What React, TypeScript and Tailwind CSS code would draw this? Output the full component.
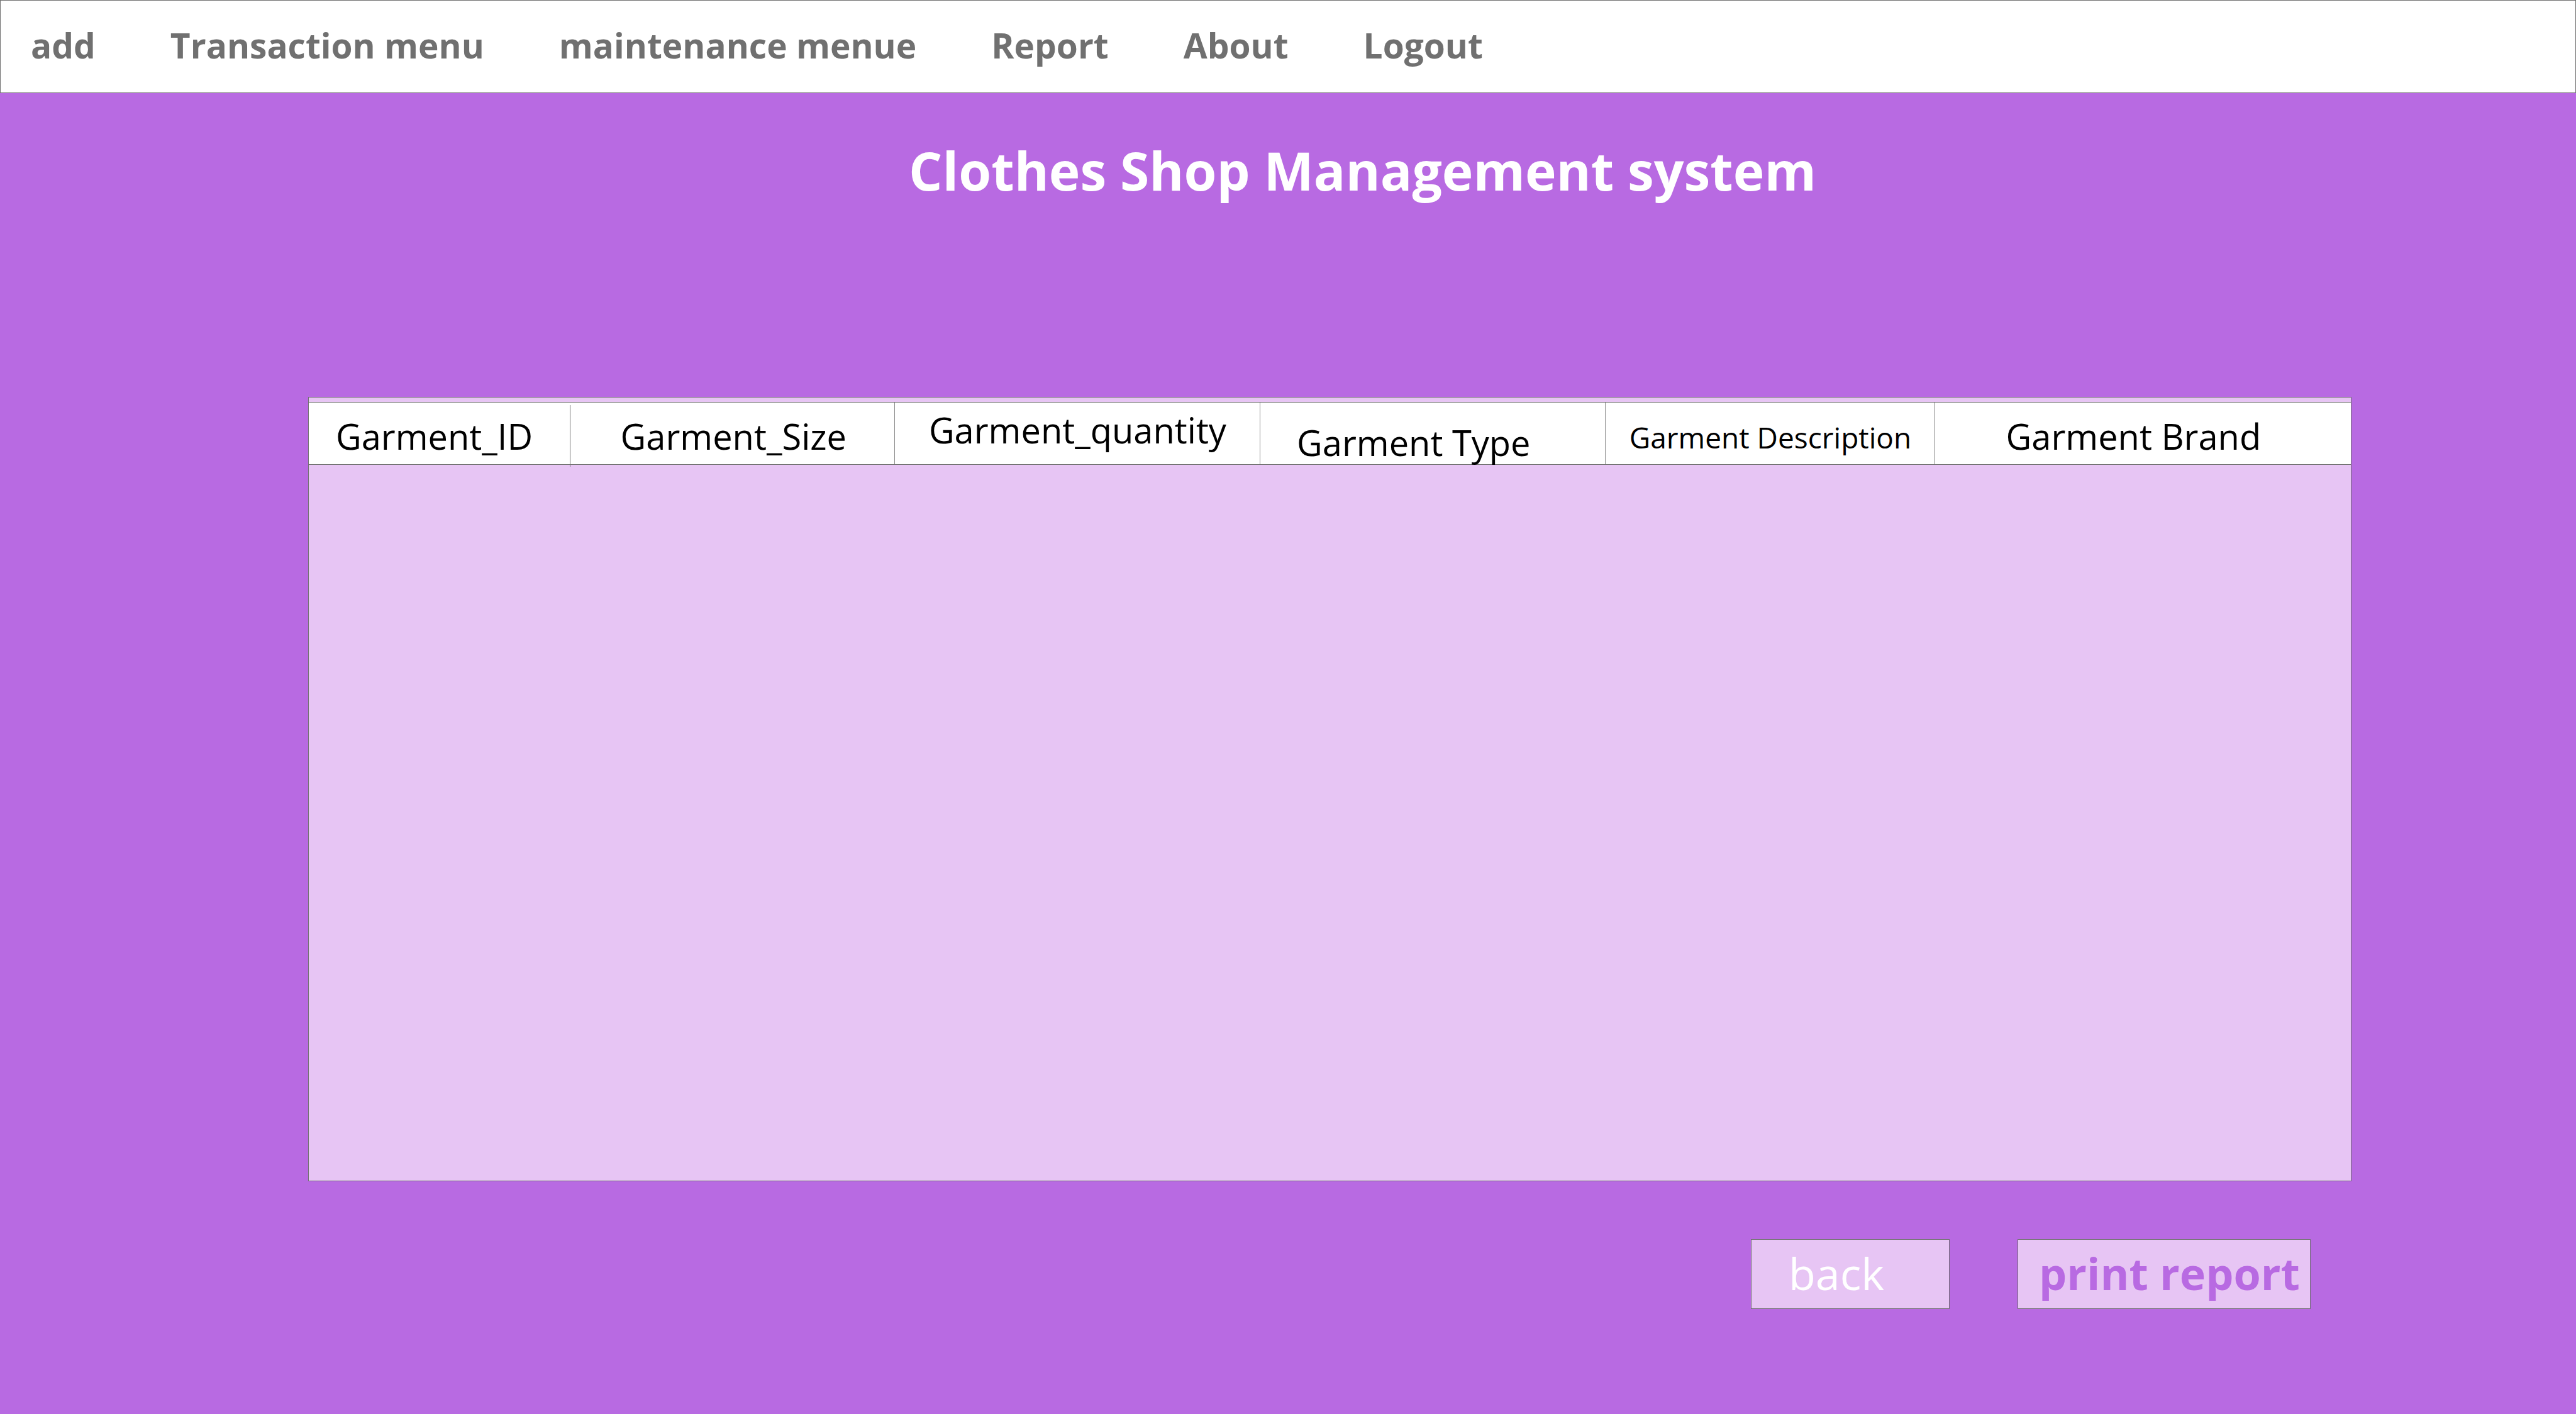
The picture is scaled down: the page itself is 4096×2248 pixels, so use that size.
const links = ["add", "Transaction menu", "maintenance menue", "Report", "About", "Logout"];

const columns = [
  { label: "Garment_ID", width: "w-[12.8%]", cell: "pl-[43px] pt-2 text-[56px]" },
  { label: "Garment_Size", width: "w-[15.9%]", cell: "pl-[80px] pt-2 text-[56px]" },
  { label: "Garment_quantity", width: "w-[17.9%]", cell: "pl-[54px] pb-3 text-[56px]" },
  { label: "Garment Type", width: "w-[16.9%]", cell: "pl-[58px] pt-7 text-[56px]" },
  { label: "Garment Description", width: "w-[16.1%]", cell: "pl-[38px] pt-3 text-[46px]" },
  { label: "Garment Brand", width: "w-[20.4%]", cell: "pl-[114px] pt-2 text-[56px]" },
];

function NavBar() {
  return (
    <nav className="flex h-[148px] items-center gap-[119px] border border-[#707070] bg-white pb-1 pl-[48px] text-[55px] leading-[80px] font-bold text-[#707070]">
      {links.map((label) => (
        <a key={label} href="#" className="whitespace-nowrap">
          {label}
        </a>
      ))}
    </nav>
  );
}

function GarmentTable() {
  return (
    <div className="min-h-[1247px] border border-[#707070] bg-[#e7c5f4] pt-[7px]">
      <table className="w-full table-fixed border-collapse">
        <thead>
          <tr className="h-[99px] border-y border-[#707070] bg-white">
            {columns.map((column, index) => (
              <th
                key={column.label}
                scope="col"
                className={`relative p-0 text-left align-middle leading-[64px] font-normal whitespace-nowrap text-black ${column.width} ${column.cell}`}
              >
                {column.label}
                {index === 0 && <span className="absolute top-1 right-0 -bottom-1 w-px bg-[#707070]" />}
                {index > 0 && index < columns.length - 1 && (
                  <span className="absolute inset-y-0 right-0 w-px bg-[#8c8c8c]" />
                )}
              </th>
            ))}
          </tr>
        </thead>
        <tbody />
      </table>
    </div>
  );
}

export default function App() {
  return (
    <div className="min-h-screen bg-[#b86ae2] font-['Open_Sans',sans-serif]">
      <NavBar />
      <main className="pr-[357px] pl-[490px]">
        <h1 className="pt-[63px] pl-[955px] text-[84px] leading-[120px] font-bold whitespace-nowrap text-white">
          Clothes Shop Management system
        </h1>
        <div className="pt-[300px]">
          <GarmentTable />
        </div>
        <div className="flex justify-end gap-[108px] pt-[92px] pr-[65px]">
          <button
            type="button"
            className="h-[111px] w-[316px] border border-[#707070] bg-[#e7c5f4] pb-1 pl-[59px] text-left text-[70px] leading-[100px] text-white"
          >
            back
          </button>
          <button
            type="button"
            className="h-[111px] w-[466px] border border-[#707070] bg-[#e7c5f4] pb-1 pl-[33px] text-left text-[70px] leading-[100px] font-bold whitespace-nowrap text-[#b86ae2]"
          >
            print report
          </button>
        </div>
      </main>
    </div>
  );
}
